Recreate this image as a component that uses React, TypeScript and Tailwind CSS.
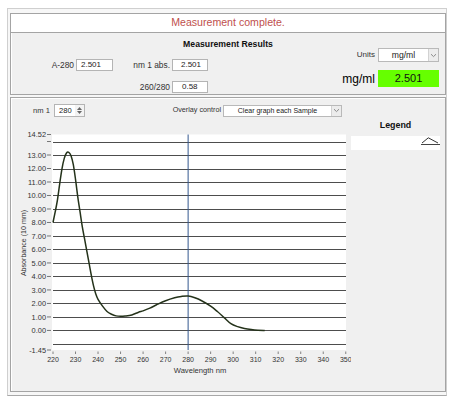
import type { ReactNode } from 'react'

type Point = [number, number]

// absorbance readings, nm -> A (10 mm path)
const spectrum: Point[] = [
  [220, 8.0], [221, 8.8], [222, 9.7], [223, 10.9], [224, 12.0], [225, 12.75],
  [226, 13.15], [227, 13.2], [228, 12.95], [229, 12.3], [230, 11.2], [231, 9.9],
  [232, 8.8], [233, 7.7], [234, 6.8], [235, 5.9], [236, 5.0], [237, 4.1],
  [238, 3.3], [239, 2.7], [240, 2.3], [242, 1.8], [244, 1.4], [246, 1.2],
  [248, 1.08], [250, 1.05], [252, 1.07], [255, 1.15], [258, 1.35], [260, 1.45],
  [263, 1.65], [266, 1.9], [270, 2.2], [274, 2.42], [277, 2.52], [280, 2.55],
  [283, 2.42], [286, 2.2], [290, 1.8], [293, 1.4], [296, 0.95], [299, 0.5],
  [302, 0.28], [305, 0.15], [308, 0.07], [311, 0.02], [314, 0.0],
]

const X_MIN = 220
const Y_MAX = 14.52
const Y_MIN = -1.45
const PLOT = { left: 52, right: 346, top: 134.5, bottom: 350 }

const xOf = (nm: number) => 53 + (nm - X_MIN) * 2.252
const yOf = (v: number) =>
  PLOT.top + ((Y_MAX - v) * (PLOT.bottom - PLOT.top)) / (Y_MAX - Y_MIN)

function smoothPath(points: Point[]) {
  const p = points.map(([nm, v]) => [xOf(nm), yOf(v)])
  let d = `M${p[0][0].toFixed(2)},${p[0][1].toFixed(2)}`
  for (let i = 0; i < p.length - 1; i++) {
    const p0 = p[i - 1] ?? p[i]
    const p1 = p[i]
    const p2 = p[i + 1]
    const p3 = p[i + 2] ?? p2
    const c1x = p1[0] + (p2[0] - p0[0]) / 6
    const c1y = p1[1] + (p2[1] - p0[1]) / 6
    const c2x = p2[0] - (p3[0] - p1[0]) / 6
    const c2y = p2[1] - (p3[1] - p1[1]) / 6
    d += ` C${c1x.toFixed(2)},${c1y.toFixed(2)} ${c2x.toFixed(2)},${c2y.toFixed(2)} ${p2[0].toFixed(2)},${p2[1].toFixed(2)}`
  }
  return d
}

function ChevronDown() {
  return (
    <svg width="7" height="5" viewBox="0 0 7 5">
      <path d="M1 1.2 L3.5 3.6 L6 1.2" fill="none" stroke="#8a8a8a" strokeWidth="1" />
    </svg>
  )
}

function TextBox({ value, className }: { value: string; className: string }) {
  return (
    <div
      className={`flex h-[12px] items-center border border-[#b4b4b4] bg-white text-[8px] leading-none text-[#222] ${className}`}
    >
      {value}
    </div>
  )
}

function Dropdown({ value, className, children }: { value: string; className: string; children?: ReactNode }) {
  return (
    <div className={`flex items-stretch border border-[#b9b9b9] bg-white ${className}`}>
      <div className="flex flex-1 items-center justify-center leading-none text-[#222]">{children ?? value}</div>
      <div className="flex w-[10px] items-center justify-center border-l border-[#d2d2d2] bg-[#ececec]">
        <ChevronDown />
      </div>
    </div>
  )
}

function ResultsPanel() {
  return (
    <div className="grid h-[62px] grid-cols-[1fr_auto] grid-rows-[auto_auto] border border-t-0 border-[#a4a4a4] bg-[#f0f0f0] shadow-[inset_1px_0_0_#fff]">
      <div className="col-span-2 col-start-1 row-start-1 pt-[6px] text-center text-[8.7px] font-bold leading-[11px] text-[#111]">
        Measurement Results
      </div>

      <div className="col-start-1 row-start-2 ml-[37px] mt-[6px] grid grid-cols-[28px_37px_59px_36px] items-center gap-y-[8px] text-[8.4px] text-[#333]">
        <span className="pr-[2px] text-right">A-280</span>
        <TextBox value="2.501" className="pl-[4px]" />
        <span className="pr-[2px] text-right">nm 1 abs.</span>
        <TextBox value="2.501" className="pl-[8px]" />
        <span />
        <span />
        <span className="pr-[2px] text-right">260/280</span>
        <TextBox value="0.58" className="pl-[9px]" />
      </div>

      <div className="col-start-2 row-span-2 row-start-1 flex flex-col items-end pr-[6px] pt-[15px]">
        <div className="flex items-center gap-[3px]">
          <span className="text-[8px] text-[#333]">Units</span>
          <Dropdown value="mg/ml" className="h-[14px] w-[61px] text-[8.6px]" />
        </div>
        <div className="mt-[8px] flex items-center gap-[3px]">
          <span className="text-[12px] leading-none text-[#000]">mg/ml</span>
          <div className="flex h-[17px] w-[61px] items-center justify-center bg-[#66ff00] text-[11px] leading-none text-[#111]">
            2.501
          </div>
        </div>
      </div>
    </div>
  )
}

function SpinBox({ value }: { value: string }) {
  return (
    <div className="ml-[4px] flex h-[13px] w-[31px] items-stretch border border-[#b4b4b4] bg-white">
      <div className="flex flex-1 items-center pl-[4px] text-[7.6px] leading-none text-[#222]">{value}</div>
      <div className="flex w-[9px] flex-col items-center justify-center gap-[1px] bg-[#f3f3f3]">
        <svg width="5" height="3" viewBox="0 0 5 3">
          <path d="M0 3 L2.5 0 L5 3 Z" fill="#666" />
        </svg>
        <svg width="5" height="3" viewBox="0 0 5 3">
          <path d="M0 0 L2.5 3 L5 0 Z" fill="#666" />
        </svg>
      </div>
    </div>
  )
}

function SpectrumChart() {
  const gridValues = Array.from({ length: 16 }, (_, i) => i - 1)
  const labelValues = Array.from({ length: 14 }, (_, i) => 13 - i)
  const xTicks = Array.from({ length: 14 }, (_, i) => 220 + i * 10)
  const cursorX = xOf(280)

  return (
    <svg width="340" height="262" viewBox="11 120 340 262" className="shrink-0">
      <rect x={PLOT.left} y={PLOT.top} width={PLOT.right - PLOT.left} height={PLOT.bottom - PLOT.top} fill="#fff" />

      {gridValues.map((v) => {
        const y = Math.round(yOf(v)) + 0.5
        return (
          <line key={v} x1={53} x2={PLOT.right} y1={y} y2={y} stroke="#4d4d4d" strokeWidth="1" shapeRendering="crispEdges" />
        )
      })}

      <g fontFamily="Liberation Sans, Arial, sans-serif" fontSize="7.4" fill="#333" textAnchor="end">
        <text x={46} y={PLOT.top + 2.6}>14.52</text>
        {labelValues.map((v) => (
          <text key={v} x={46} y={yOf(v) + 2.6}>
            {v.toFixed(2)}
          </text>
        ))}
        <text x={46} y={PLOT.bottom + 2.6}>-1.45</text>
      </g>
      {[Y_MAX, 14, ...labelValues, Y_MIN].map((v) => (
        <line key={`t${v}`} x1={47} x2={51} y1={yOf(v)} y2={yOf(v)} stroke="#555" strokeWidth="0.8" />
      ))}

      <line x1={cursorX} x2={cursorX} y1={PLOT.top} y2={PLOT.bottom} stroke="#34588f" strokeWidth="1" />

      <path d={smoothPath(spectrum)} fill="none" stroke="#24321a" strokeWidth="1.5" strokeLinejoin="round" />

      {xTicks.map((nm) => (
        <g key={nm}>
          <line x1={xOf(nm)} x2={xOf(nm)} y1={351.5} y2={354} stroke="#666" strokeWidth="0.8" />
          <text
            x={xOf(nm)}
            y={361.5}
            textAnchor="middle"
            fontFamily="Liberation Sans, Arial, sans-serif"
            fontSize="7"
            fill="#333"
          >
            {nm}
          </text>
        </g>
      ))}

      <text x={200} y={373} textAnchor="middle" fontFamily="Liberation Sans, Arial, sans-serif" fontSize="7.6" fill="#333">
        Wavelength nm
      </text>
      <text
        x={24}
        y={243}
        transform="rotate(-90 24 243)"
        textAnchor="middle"
        dominantBaseline="middle"
        fontFamily="Liberation Sans, Arial, sans-serif"
        fontSize="7.1"
        fill="#333"
      >
        Absorbance (10 mm)
      </text>
    </svg>
  )
}

function GraphPanel() {
  return (
    <div className="mt-[2px] h-[295px] border border-[#a4a4a4] bg-[#f0f0f0] shadow-[inset_1px_1px_0_#fff]">
      <div className="flex items-center pb-[3px] pl-[22px] pt-[6px] text-[7.6px] text-[#333]">
        <span className="w-[17px]">nm 1</span>
        <SpinBox value="280" />
        <span className="ml-[76px] w-[60px] text-right text-[7.2px]">Overlay control</span>
        <Dropdown value="Clear graph each Sample" className="ml-[2px] h-[12px] w-[119px] text-[7px]" />
      </div>
      <div className="flex">
        <SpectrumChart />
        <div className="flex w-[89px] flex-col items-center">
          <span className="text-[8.9px] font-bold leading-[10px] text-[#111]">Legend</span>
          <div className="relative mt-[6px] h-[14px] w-full bg-white">
            <svg width="19" height="9" viewBox="0 0 19 9" className="absolute right-0 top-[1px]">
              <path d="M1 6 L7.3 0.8 L17 6" fill="none" stroke="#333" strokeWidth="1" />
              <line x1="0" x2="19" y1="7.5" y2="7.5" stroke="#444" strokeWidth="1" />
            </svg>
          </div>
        </div>
      </div>
    </div>
  )
}

export default function App() {
  return (
    <div className="h-[404px] w-[457px] overflow-hidden bg-white pl-[7px] pt-[8px] font-['Liberation_Sans',Arial,sans-serif] text-[#333]">
      <div className="w-[440px] border border-[#cfcfcf] border-b-[#a8a8a8] bg-[#f7f7f7] pb-[3px] pl-[2px] pt-[4px]">
        <div className="flex h-[20px] items-center justify-center border border-[#a4a4a4] bg-white text-[10.6px] text-[#c0504d]">
          Measurement complete.
        </div>
        <ResultsPanel />
        <GraphPanel />
      </div>
    </div>
  )
}
